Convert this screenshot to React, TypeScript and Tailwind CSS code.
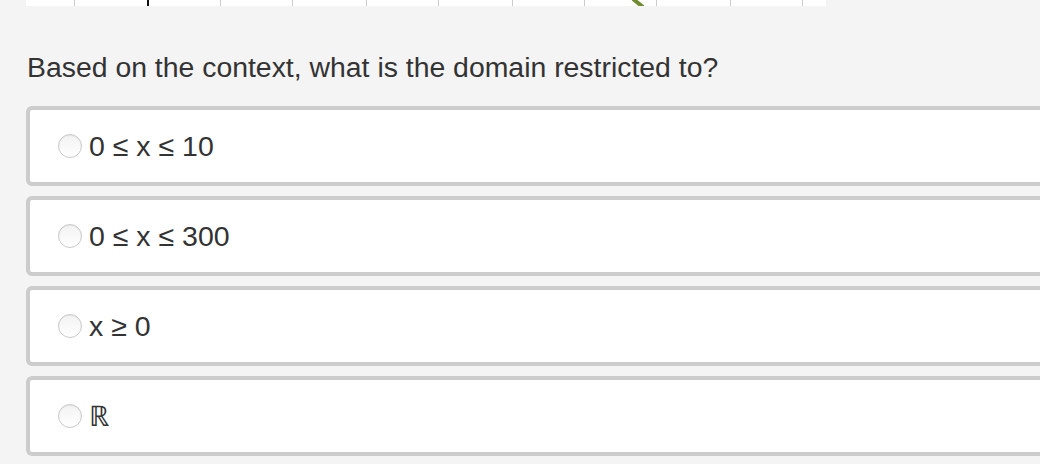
const gridLines = [48, 194, 266, 340, 412, 486, 558, 630, 704, 776];

const options = ['0 ≤ x ≤ 10', '0 ≤ x ≤ 300', 'x ≥ 0', 'ℝ'];

function Radio() {
  return (
    <span className="w-6 h-6 shrink-0 rounded-full border border-[#c9c9c9] bg-gradient-to-b from-[#f2f2f2] to-white shadow-[inset_0_1px_1px_rgba(0,0,0,0.06)]" />
  );
}

export default function App() {
  return (
    <div className="w-[1040px] h-[464px] overflow-hidden bg-[#f4f4f4] text-[#333333] font-['Liberation_Sans',Arial,sans-serif]">
      <div className="ml-[26px] w-[800px] h-[6px] bg-white">
        <svg width="800" height="6" viewBox="0 0 800 6" className="block">
          {gridLines.map((x) => (
            <line key={x} x1={x + 0.5} y1="0" x2={x + 0.5} y2="6" stroke="#cccccc" strokeWidth="1" />
          ))}
          <line x1="122" y1="0" x2="122" y2="6" stroke="#111111" strokeWidth="2" />
          <line x1="607" y1="-1" x2="617" y2="7" stroke="#6e8b2e" strokeWidth="4" />
        </svg>
      </div>

      <h1 className="mt-[45px] ml-[27px] text-[28.4px] leading-[32px] font-normal">
        Based on the context, what is the domain restricted to?
      </h1>

      <div className="mt-[23px] ml-[26px] w-[1100px] flex flex-col gap-[10px]">
        {options.map((opt) => (
          <label
            key={opt}
            className="h-[80px] border-4 border-[#cccccc] rounded-[6px] bg-white flex items-center pl-[28px] gap-[7px] cursor-pointer"
          >
            <Radio />
            <span className="text-[28.5px] leading-none">{opt}</span>
          </label>
        ))}
      </div>
    </div>
  );
}
